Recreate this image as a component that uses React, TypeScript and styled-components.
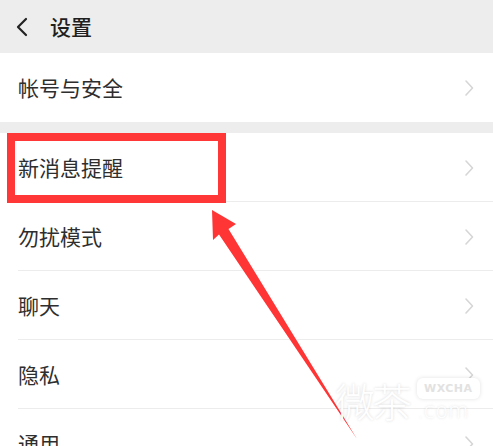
import styled, { createGlobalStyle } from "styled-components";

const GlobalStyle = createGlobalStyle`
    html, body {
        margin: 0;
        padding: 0;
        background: #ffffff;
        overflow: hidden;
    }
    body {
        font-family: "Noto Sans CJK SC", "Noto Sans", sans-serif;
    }
`;

const Screen = styled.div`
    position: relative;
    width: 493px;
    height: 446px;
    overflow: hidden;
    background: #ededed;
`;

const Header = styled.header`
    display: flex;
    align-items: center;
    height: 53px;
    padding-left: 16px;
    gap: 22px;
    background: #ededed;
`;

const HeaderTitle = styled.div`
    font-size: 21px;
    font-weight: 500;
    color: #1f1f1f;
    line-height: 1;
`;

const Group = styled.div<{ $gap?: number }>`
    display: flex;
    flex-direction: column;
    background: #ffffff;
    margin-bottom: ${(p) => p.$gap ?? 0}px;
`;

const Row = styled.div`
    position: relative;
    display: flex;
    align-items: center;
    justify-content: space-between;
    height: 69px;
    padding: 0 18px;
`;

const RowLine = styled.div`
    position: absolute;
    left: 18px;
    right: 0;
    bottom: 0;
    height: 1px;
    background: #ececec;
`;

const RowLabel = styled.span`
    font-size: 21px;
    color: #2e2e2e;
    line-height: 1;
`;

const Highlight = styled.div`
    position: absolute;
    left: 7px;
    top: 133px;
    width: 219px;
    height: 70px;
    box-sizing: border-box;
    border: 8px solid #ff3737;
`;

const Overlay = styled.svg`
    position: absolute;
    left: 0;
    top: 0;
    pointer-events: none;
`;

const Watermark = styled.div`
    position: absolute;
    left: 335px;
    top: 378px;
    display: flex;
    align-items: center;
    gap: 8px;
    color: #ffffff;
    text-shadow: 0 0 3px rgba(0, 0, 0, 0.16);
`;

const WatermarkBig = styled.span`
    font-size: 40px;
    line-height: 1;
    font-weight: 300;
    letter-spacing: -3px;
`;

const WatermarkSide = styled.div`
    display: flex;
    flex-direction: column;
    align-items: flex-start;
    gap: 2px;
`;

const Bubble = styled.span`
    font-family: "DejaVu Sans", sans-serif;
    font-size: 11px;
    font-weight: 700;
    letter-spacing: 0.5px;
    padding: 4px 7px;
    border-radius: 6px;
    background: #ffffff;
    color: #e2e2e2;
    text-shadow: none;
    box-shadow: 0 0 4px rgba(0, 0, 0, 0.12);
`;

const DotCom = styled.span`
    font-family: "DejaVu Sans", sans-serif;
    font-size: 21px;
    line-height: 1;
    font-weight: 300;
`;

function Chevron({ color, left }: { color: string; left?: boolean }) {
    return (
        <svg width="12" height="20" viewBox="0 0 12 20" fill="none">
            <path
                d={left ? "M10 2 L2 10 L10 18" : "M3 3 L9.5 10 L3 17"}
                stroke={color}
                strokeWidth={left ? 2.2 : 1.6}
                strokeLinecap="round"
                strokeLinejoin="round"
            />
        </svg>
    );
}

const items = ["新消息提醒", "勿扰模式", "聊天", "隐私", "通用"];

export default function App() {
    return (
        <>
            <GlobalStyle />
            <Screen>
                <Header>
                    <Chevron color="#222222" left />
                    <HeaderTitle>设置</HeaderTitle>
                </Header>
                <Group $gap={11}>
                    <Row>
                        <RowLabel>帐号与安全</RowLabel>
                        <Chevron color="#d6d6d6" />
                    </Row>
                </Group>
                <Group>
                    {items.map((label) => (
                        <Row key={label}>
                            <RowLabel>{label}</RowLabel>
                            <Chevron color="#d6d6d6" />
                            <RowLine />
                        </Row>
                    ))}
                </Group>
                <Highlight />
                <Overlay width="493" height="446" viewBox="0 0 493 446">
                    <polygon
                        points="212,210 236,224 228.5,229 357,439 219,234.5 213,240"
                        fill="#ff3535"
                    />
                </Overlay>
                <Watermark>
                    <WatermarkBig>微茶</WatermarkBig>
                    <WatermarkSide>
                        <Bubble>WXCHA</Bubble>
                        <DotCom>.com</DotCom>
                    </WatermarkSide>
                </Watermark>
            </Screen>
        </>
    );
}
